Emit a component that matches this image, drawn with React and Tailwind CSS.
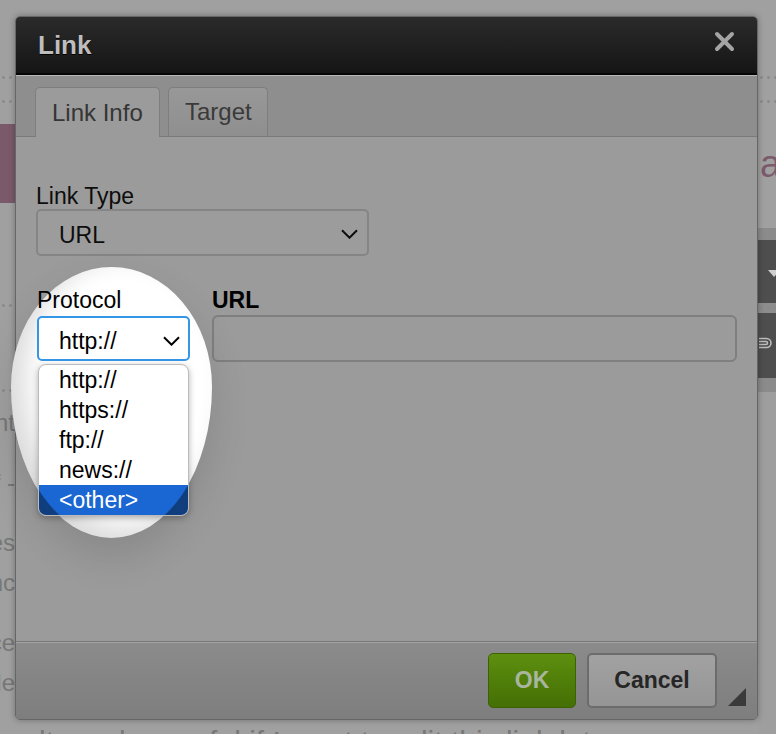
import React from 'react';

const Dots = ({ className = '' }) => (
  <div className={`h-[3px] bg-[radial-gradient(circle,#8a8a8a_1px,transparent_1.6px)] bg-[length:7px_3px] ${className}`} />
);

const Chevron = ({ className = '' }) => (
  <svg className={className} width="17" height="10" viewBox="0 0 17 10" fill="none" stroke="currentColor" strokeWidth="2">
    <path d="M1 1.2l7.5 7.5 7.5-7.5" />
  </svg>
);

const protocols = ['http://', 'https://', 'ftp://', 'news://', '<other>'];

const App = () => {
  return (
    <div className="relative w-[776px] h-[734px] overflow-hidden bg-[#a0a0a0] font-['Liberation_Sans',Arial,sans-serif]">
      {/* page behind the dialog */}
      <div className="flex h-full">
        <div className="w-[15px] shrink-0 flex flex-col overflow-hidden text-[24px] text-[#777]">
          <Dots className="mt-[76px]" />
          <Dots className="mt-[21px]" />
          <div className="mt-[21px] h-[79px] bg-[#7a5a6a]" />
          <Dots className="mt-[101px]" />
          <Dots className="mt-[82px]" />
          <div className="mt-[11px] h-[40px] leading-[40px] flex justify-end whitespace-nowrap">Content</div>
          <div className="mt-[20px] h-[40px] leading-[40px] flex justify-end whitespace-nowrap">of -</div>
          <div className="mt-[20px] h-[40px] leading-[40px] flex justify-end whitespace-nowrap">classes</div>
          <div className="h-[40px] leading-[40px] flex justify-end whitespace-nowrap">enhanc</div>
          <div className="mt-[20px] h-[40px] leading-[40px] flex justify-end whitespace-nowrap">once</div>
          <div className="h-[40px] leading-[40px] flex justify-end whitespace-nowrap">code</div>
        </div>
        <div className="flex-1 flex flex-col justify-end">
          <div className="-mb-[28px] h-[40px] leading-[40px] pl-[24px] text-[30px] text-[#777] whitespace-nowrap">
            lt can be useful if I want to edit this link later
          </div>
        </div>
        <div className="w-[18px] shrink-0 flex flex-col">
          <Dots className="mt-[76px]" />
          <Dots className="mt-[21px]" />
          <div className="mt-[41px] h-[40px] leading-[40px] pl-[2px] text-[38px] text-[#7b5b6b]">a</div>
          <div className="mt-[44px] h-[12px] bg-[#8b8b8b]" />
          <div className="h-[63px] bg-[#4e4e4e] pt-[30px] pl-[10px]">
            <div className="w-0 h-0 border-l-[6px] border-r-[6px] border-t-[7px] border-l-transparent border-r-transparent border-t-[#d0d0d0]" />
          </div>
          <div className="h-[10px] bg-[#8d8d8d] flex items-center">
            <Dots className="w-full" />
          </div>
          <div className="h-[65px] bg-[#4e4e4e] pt-[23px] pl-[1px]">
            <svg width="13" height="16" viewBox="0 0 13 16" fill="none" stroke="#bdbdbd" strokeWidth="1.6">
              <path d="M0 2.5h7.5a4.5 4.5 0 0 1 0 9H0" />
              <path d="M0 5.5h7a1.5 1.5 0 0 1 0 3H0" />
            </svg>
          </div>
          <div className="h-[14px] bg-[#8b8b8b]" />
          <div className="flex-1 bg-[#9e9e9e]" />
        </div>
      </div>

      {/* Link dialog */}
      <div className="absolute left-[15px] top-[16px] w-[743px] h-[704px] flex flex-col rounded-[5px] border border-[#666] overflow-hidden shadow-[0_0_6px_rgba(0,0,0,0.3)]">
        <div className="h-[58px] shrink-0 flex justify-between pl-[22px] pr-[22px] bg-gradient-to-b from-[#2b2b2b] to-[#151515] border-b-2 border-[#060606]">
          <span className="self-center text-[26px] font-bold text-[#bdbdbd] [text-shadow:0_1px_0_#000]">Link</span>
          <svg className="mt-[14px]" width="21" height="21" viewBox="0 0 21 21" stroke="#a4a4a4" strokeWidth="4" strokeLinecap="round">
            <path d="M3 3l15 15M18 3L3 18" />
          </svg>
        </div>
        <div className="h-px shrink-0 bg-[#b8b8b8]" />

        <div className="h-[61px] shrink-0 flex items-end gap-[8px] pl-[19px] bg-[#8e8e8e] border-b border-[#7a7a7a]">
          <div className="w-[125px] h-[50px] -mb-px flex items-center pl-[16px] rounded-t-[5px] border border-b-0 border-[#7e7e7e] bg-[#9b9b9b] text-[24px] text-[#353535]">
            Link Info
          </div>
          <div className="w-[100px] h-[49px] flex items-center pl-[16px] rounded-t-[5px] border border-b-0 border-[#7e7e7e] bg-gradient-to-b from-[#989898] to-[#8f8f8f] text-[24px] text-[#3a3a3a]">
            Target
          </div>
        </div>

        <div className="flex-1 bg-[#9b9b9b] pl-[20px] pr-[20px] pt-[46px] text-[#0d0d0d]">
          <div className="h-[26px] leading-[26px] text-[23px]">Link Type</div>
          <div className="w-[333px] h-[47px] flex items-center justify-between pl-[21px] pr-[9px] rounded-[5px] border-2 border-[#858585] bg-[#9c9c9c] text-[23px]">
            <span className="mt-[6px]">URL</span>
            <Chevron className="mt-[3px]" />
          </div>

          <div className="mt-[31px] flex gap-[22px]">
            <div className="w-[153px] ml-px shrink-0">
              <div className="relative z-20 w-max h-[26px] leading-[26px] text-[23px] text-black">Protocol</div>
              <div className="relative z-20 mt-[3px] h-[45px] flex items-center justify-between pl-[20px] pr-[8px] rounded-[5px] border-2 border-[#3696e6] bg-white text-[23px] text-black">
                <span className="mt-[6px]">http://</span>
                <Chevron className="mt-[4px]" />
              </div>
              <div className="relative z-20 mt-[3px] mx-px overflow-hidden rounded-[8px] border border-[#bcbcbc] bg-white text-[23px] text-black shadow-[0_2px_6px_rgba(0,0,0,0.3)]">
                {protocols.map((p, i) => (
                  <div
                    key={p}
                    className={i === protocols.length - 1 ? 'h-[30px] leading-[30px] pl-[20px] bg-[#1a66d2] text-white' : 'h-[30px] leading-[30px] pl-[20px]'}
                  >
                    {p}
                  </div>
                ))}
                {/* parts of the list outside the spotlight stay dimmed */}
                <div className="pointer-events-none absolute inset-0 bg-[radial-gradient(101px_151px_at_73px_22px,transparent_99%,rgba(0,0,0,0.4)_100%)]" />
              </div>
            </div>
            <div className="flex-1">
              <div className="h-[26px] leading-[26px] text-[23px] font-bold text-black">URL</div>
              <div className="mt-[2px] h-[47px] rounded-[6px] border-2 border-[#7f7f7f] bg-[#9b9b9b]" />
            </div>
          </div>
        </div>

        <div className="h-[78px] shrink-0 flex items-center justify-end pr-[11px] border-t border-[#777] bg-gradient-to-b from-[#8b8b8b] to-[#7e7e7e] shadow-[inset_0_1px_0_#a4a4a4]">
          <button className="w-[88px] h-[55px] rounded-[5px] border border-[#3a6404] bg-gradient-to-b from-[#5e8f0f] to-[#436f05] text-[23px] font-bold text-[#a9b59f]">
            OK
          </button>
          <button className="ml-[11px] w-[130px] h-[55px] rounded-[5px] border-2 border-[#6c6c6c] bg-gradient-to-b from-[#a2a2a2] to-[#959595] text-[23px] font-bold text-[#262626]">
            Cancel
          </button>
          <svg className="ml-[11px] self-end mb-[13px]" width="18" height="18" viewBox="0 0 18 18">
            <polygon points="18,0 18,18 0,18" fill="#3a3a3a" />
          </svg>
        </div>
      </div>

      {/* spotlight on the protocol field */}
      <div className="absolute z-10 left-[11px] top-[267px] w-[201px] h-[271px] rounded-[50%/120px_120px_151px_151px] bg-white shadow-[inset_14px_-10px_24px_rgba(0,0,0,0.14),0_18px_40px_rgba(0,0,0,0.12)]" />
    </div>
  );
};

export default App;
